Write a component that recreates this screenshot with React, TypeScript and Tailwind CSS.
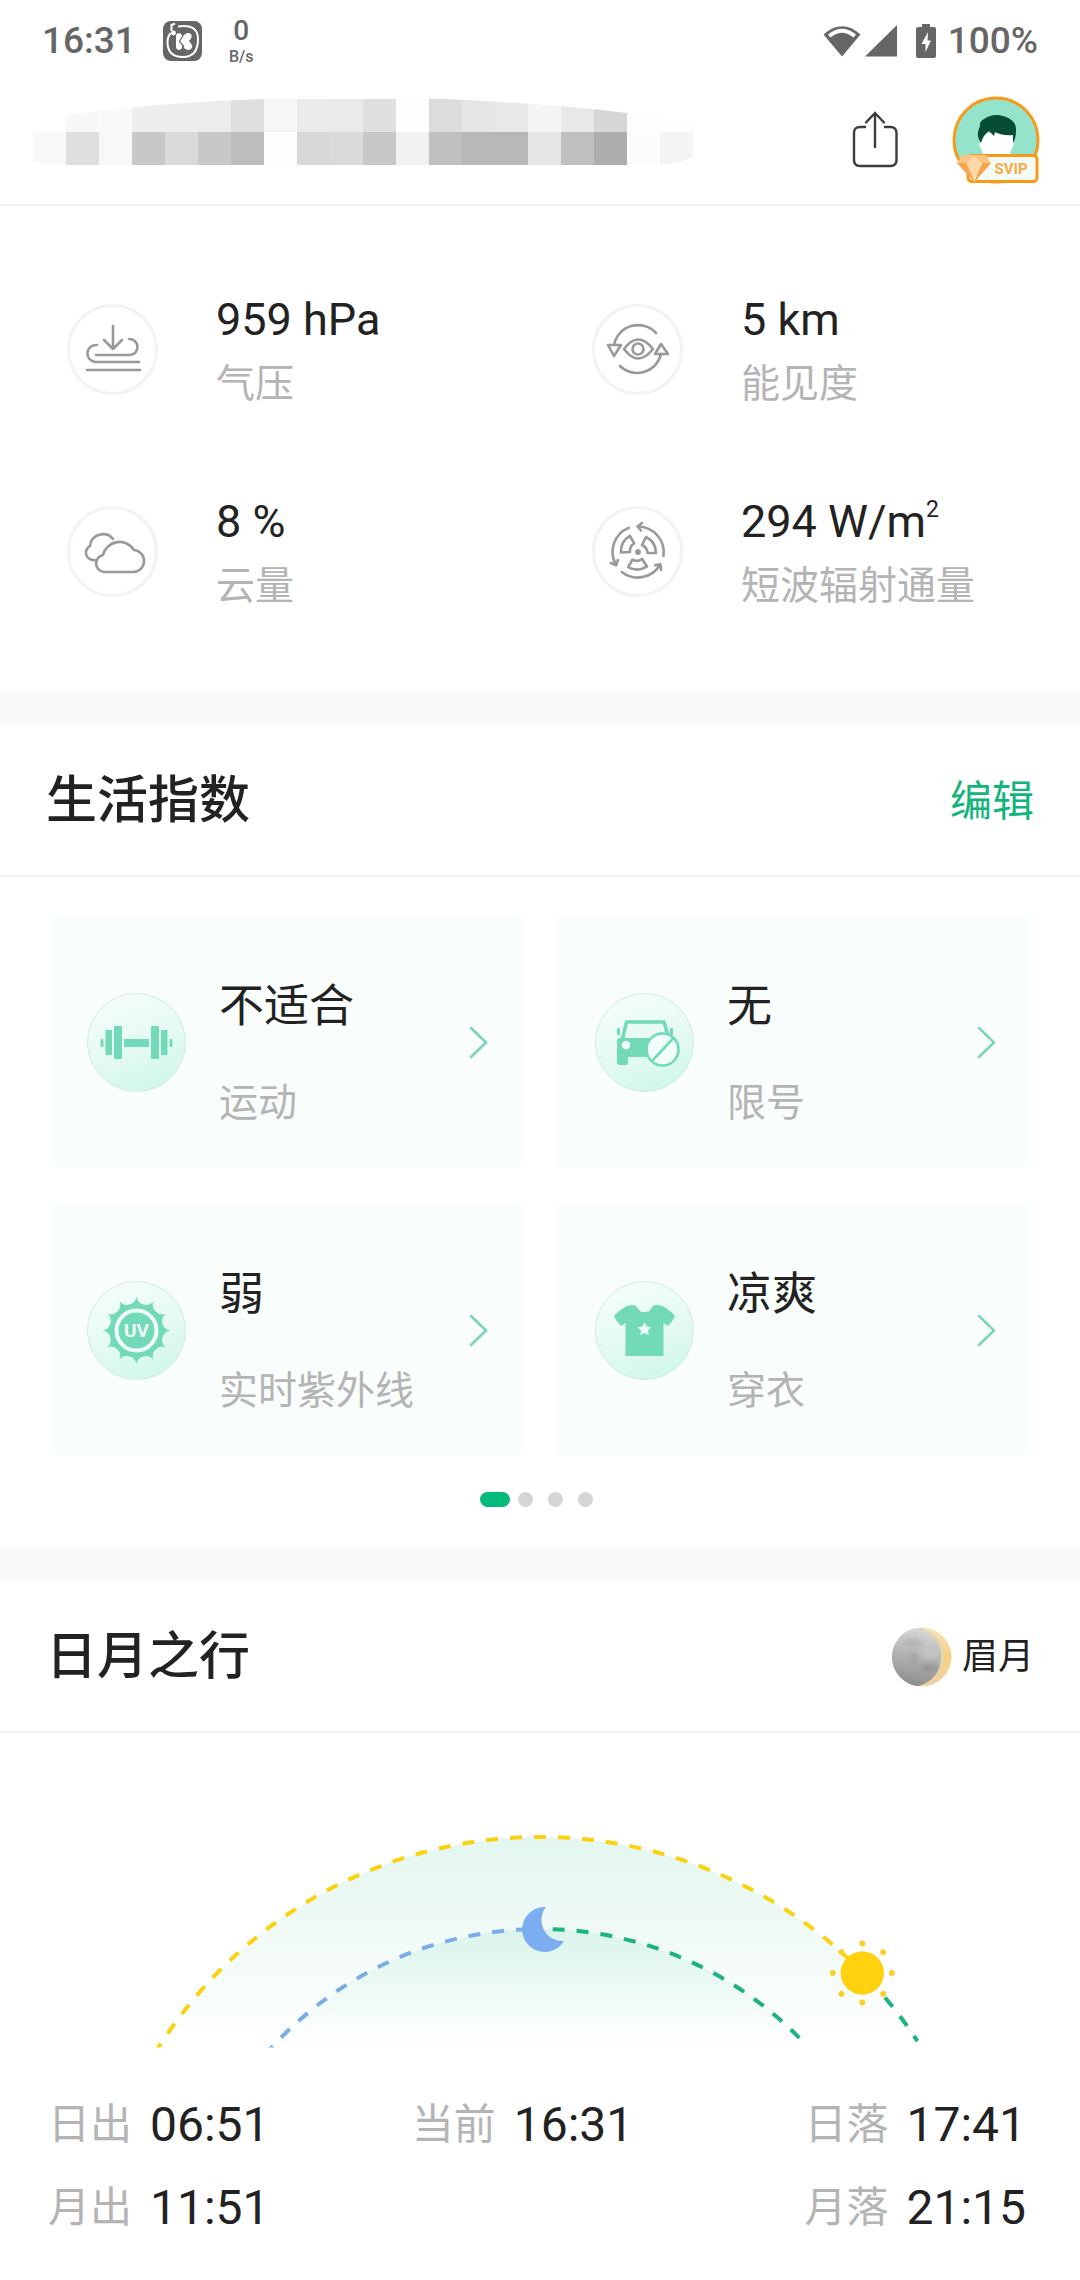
import React from 'react';

interface Metric {
  value: React.ReactNode;
  label: string;
  icon: React.ReactNode;
}

interface LifeIndex {
  value: string;
  label: string;
  icon: React.ReactNode;
}

const GREEN = '#72dab8';

const PressureIcon = () => (
  <>
    <path d="M46 22V45M37 36L46 45L55 36" />
    <path d="M62 35A8 8 0 0 1 63 51H29" />
    <path d="M30 41A8.5 8.5 0 0 0 28 58H72" />
    <path d="M20 66H73" />
  </>
);

const VisibilityIcon = () => (
  <>
    <path d="M22 41A24.5 24.5 0 0 1 64 29" />
    <path d="M69 50A24.5 24.5 0 0 1 28 62" />
    <path d="M16 41H29L22 52Z" />
    <path d="M63 50H76L69 40Z" />
    <path d="M32 45Q46 26 61 45Q46 64 32 45Z" />
    <circle cx="46" cy="45" r="5.5" />
  </>
);

const CloudIcon = () => (
  <>
    <path d="M46 33A13 13 0 0 0 23 40A7.5 7.5 0 0 0 28 54" />
    <path d="M37 66H65A11 11 0 0 0 67 44A17 17 0 0 0 36 49A8.6 8.6 0 0 0 37 66Z" />
  </>
);

const RadiationIcon = () => (
  <>
    <circle cx="46" cy="46" r="1.6" fill="#999" />
    {[0, 120, 240].map((deg) => (
      <g key={deg} transform={`rotate(${deg} 46 46)`}>
        <path d="M71.500 50A26 26 0 0 0 46 20.500M50 17L45.500 20.500L49 24.500" />
        <path d="M54 31A18 18 0 0 1 64 47H55.500A9 9 0 0 0 50 39Z" />
      </g>
    ))}
  </>
);

const DumbbellIcon = () => (
  <g fill={GREEN}>
    <rect x="37" y="46" width="25" height="8" />
    <rect x="27" y="33" width="8" height="33" rx="1" />
    <rect x="18.500" y="37" width="6.500" height="25" rx="1" />
    <rect x="13.500" y="46" width="3" height="8" rx="1" />
    <rect x="64" y="33" width="8" height="33" rx="1" />
    <rect x="74" y="37" width="6.500" height="25" rx="1" />
    <rect x="82.500" y="46" width="3" height="8" rx="1" />
  </g>
);

const CarIcon = () => (
  <g>
    <path d="M27.500 46L31.500 29H69L74 46" fill="none" stroke={GREEN} strokeWidth="3.500" strokeLinejoin="round" />
    <path d="M22 48Q22 45 25 45H76V64H33V70Q33 72 31 72H24Q22 72 22 70Z" fill={GREEN} />
    <rect x="22" y="35" width="3" height="7" rx="1" fill={GREEN} />
    <rect x="75" y="35" width="3" height="7" rx="1" fill={GREEN} />
    <circle cx="31" cy="52" r="4.200" fill="#f4fefa" />
    <circle cx="67.500" cy="56.500" r="16" fill="#f1fdf9" stroke={GREEN} strokeWidth="2.600" />
    <path d="M57 68L78.500 45" stroke={GREEN} strokeWidth="2.600" />
  </g>
);

const UvIcon = () => {
  const tips = Array.from({ length: 12 }, (_, i) => {
    const a = (i * Math.PI) / 6;
    return `${(49.5 + 34 * Math.sin(a)).toFixed(2)} ${(49.5 - 34 * Math.cos(a)).toFixed(2)}`;
  });
  const d = `M${tips[0]}${tips.slice(1).map((p) => `A9.5 9.5 0 0 0 ${p}`).join('')}A9.5 9.5 0 0 0 ${tips[0]}Z`;

  return (
    <g>
      <path d={d} fill={GREEN} />
      <circle cx="49.5" cy="49.5" r="20" fill="none" stroke="#effcf8" strokeWidth="4" />
      <text x="49.5" y="56" textAnchor="middle" fontSize="19" fontWeight="700" fill="#effcf8">UV</text>
    </g>
  );
};

const ShirtIcon = () => (
  <g>
    <path
      d="M39 24Q42 25 44 29Q45 31 48 31H51Q54 31 55 29Q57 25 60 24Q68 24 72 28Q77 31 80 35Q78 40 73 45L68.500 42V75H30.500V42L26 45Q21 40 19 35Q22 31 27 28Q31 24 39 24Z"
      fill={GREEN}
    />
    <path
      d="M49.500 42L51.300 46L55.500 46.500L52.500 49.500L53.200 53.500L49.500 51.500L45.800 53.500L46.500 49.500L43.500 46.500L47.700 46Z"
      fill="#effcf8"
      stroke="#effcf8"
      strokeLinejoin="round"
    />
  </g>
);

const metrics: Metric[] = [
  { value: '959 hPa', label: '气压', icon: <PressureIcon /> },
  { value: '5 km', label: '能见度', icon: <VisibilityIcon /> },
  { value: '8 %', label: '云量', icon: <CloudIcon /> },
  {
    value: (
      <>
        294 W/m<sup className="-top-[20px] text-[23px] leading-none">2</sup>
      </>
    ),
    label: '短波辐射通量',
    icon: <RadiationIcon />,
  },
];

const lifeIndexes: LifeIndex[] = [
  { value: '不适合', label: '运动', icon: <DumbbellIcon /> },
  { value: '无', label: '限号', icon: <CarIcon /> },
  { value: '弱', label: '实时紫外线', icon: <UvIcon /> },
  { value: '凉爽', label: '穿衣', icon: <ShirtIcon /> },
];

// Masked location name, two rows of tiles
const TILE_TOP = ['', '#f7f7f7', '#f9f9f9', '#eeeeee', '#eeeeee', '#ececec', '#dfdfdf', '#f6f6f6', '#ebebeb', '#eaeaea', '#dfdfdf', '#fefefe', '#dcdcdc', '#e6e6e6', '#e8e8e8', '#f5f5f5', '#e8e8e8', '#d6d6d6', '#fdfdfd', '#fdfdfd'];
const TILE_BOTTOM = ['#f8f8f8', '#dfdfdf', '#f8f8f8', '#c8c8c8', '#dadada', '#c8c8c8', '#bebebe', '#fdfdfd', '#d8d8d8', '#dadada', '#c8c8c8', '#f1f1f1', '#c0c0c0', '#b8b8b8', '#b8b8b8', '#e5e5e5', '#bfbfbf', '#adadad', '#fcfcfc', '#f4f4f4'];

const StatusBar = () => (
  <div className="flex h-[82px] items-center justify-between px-[42px] text-[37px] font-medium text-[#666]">
    <div className="flex items-center">
      <span>16:31</span>
      <svg className="ml-[27px] size-10" viewBox="0 0 40 40" aria-hidden="true">
        <rect width="39" height="40" rx="8" fill="#666" />
        <path d="M15 5.500Q35 2.500 35 18Q35 36 20 36Q4.500 36 4.500 21Q4.500 15 8 12" fill="none" stroke="#fff" strokeWidth="2" />
        <path d="M7.500 4.500L12 2.500M8.500 5V10" stroke="#fff" strokeWidth="2" />
        <circle cx="10.500" cy="12" r="2.400" fill="#fff" />
        <path d="M13 14Q16 10 19 14V17Q23 10 28 13Q30 16 26 20Q31 25 28 28Q23 31 19 24V27Q16 31 13 27Z" fill="#fff" />
        <path d="M19 16L16.500 20.500L21 26" fill="none" stroke="#666" strokeWidth="1.200" />
      </svg>
      <span className="ml-[26px] flex flex-col items-center pb-[3px]">
        <span className="text-[28px] leading-[33px]">0</span>
        <span className="text-[16px] leading-[19px]">B/s</span>
      </span>
    </div>
    <div className="flex items-center">
      <svg className="h-[34px] w-[74px]" viewBox="0 0 74 34" aria-hidden="true">
        <path d="M0.500 10.500Q19 -6 37.500 10.500L19 32.500Z" fill="#666" />
        <path d="M5 10.500Q19 -1 33 10.500L30.500 13.500Q19 4 7.500 13.500Z" fill="#fff" />
        <path d="M74 1V32.500H42Z" fill="#666" />
      </svg>
      <svg className="ml-[19px] h-[36px] w-[20px]" viewBox="0 0 20 36" aria-hidden="true">
        <path d="M6 1H14V4H18Q20 4 20 6V33Q20 35 18 35H2Q0 35 0 33V6Q0 4 2 4H6Z" fill="#666" />
        <path d="M12 9L5.500 21H9.500V29L15 17.500H11.500Z" fill="#fff" />
      </svg>
      <span className="ml-3">100%</span>
    </div>
  </div>
);

const Avatar = () => (
  <svg className="size-[90px]" viewBox="0 0 90 90" aria-hidden="true">
    <circle cx="45" cy="45" r="42" fill="#94e4cb" stroke="#f79a1c" strokeWidth="3" />
    <path d="M29 38H62V47Q64 50 61 53Q59 58 59 62H32Q32 58 30 53Q27 50 29 47Z" fill="#fff" />
    <path d="M30 48Q24 40 29 31Q28 27 33 24Q42 18 52 21Q66 25 65 36Q65 43 62 48V40Q52 41 44 37L43 41L38 36Q32 40 30 48Z" fill="#064c36" />
    <rect x="17" y="60.500" width="69" height="26" rx="4" fill="#f4fbf5" stroke="#f79a1c" strokeWidth="3" />
    <path d="M6 68L11 60H35L40 68L23.500 87Z" fill="#fbc483" />
    <path d="M6 68H15L23.500 87ZM31 68H40L23.500 87Z" fill="#f6a54d" />
    <path d="M16 68L23 61L31 68L23.500 86Z" fill="#fdd9a8" />
    <text x="60" y="79" textAnchor="middle" fontSize="15" fontWeight="700" fill="#f5aa45">SVIP</text>
  </svg>
);

const Header = () => (
  <header className="border-b-2 border-[#f1f1f1]">
    <StatusBar />
    <div className="flex h-[122px] items-center justify-between pb-[6px] pl-[33px] pr-[39px]">
      <svg className="h-[82px] w-[660px]" viewBox="0 0 660 82" aria-hidden="true">
        <clipPath id="tile-edge">
          <path d="M0 33H33V16Q130 3 231 0H410Q510 4 594 14L660 26V59Q645 64 627 66H33Q12 66 0 62Z" />
        </clipPath>
        <g clipPath="url(#tile-edge)" shapeRendering="crispEdges">
          {TILE_TOP.map((fill, i) => fill && <rect key={i} x={i * 33} y="0" width="33" height="33" fill={fill} />)}
          {TILE_BOTTOM.map((fill, i) => (
            <rect key={i} x={i * 33} y="33" width="33" height="33" fill={fill} />
          ))}
        </g>
      </svg>
      <div className="flex items-center gap-[53px]">
        <button type="button" aria-label="分享">
          <svg className="h-[58px] w-[46px]" viewBox="0 1 46 58" fill="none" stroke="#3c3c3c" strokeWidth="2.400" strokeLinecap="round">
            <path d="M13 17H8Q2 17 2 23V50Q2 56 8 56H38.500Q44.500 56 44.500 50V23Q44.500 17 38.500 17H33" />
            <path d="M23 3V37M14 12.500L23 3L32 12.500" />
          </svg>
        </button>
        <button type="button" aria-label="我的">
          <Avatar />
        </button>
      </div>
    </div>
  </header>
);

const MetricItem: React.FC<Metric> = ({ value, label, icon }) => (
  <div className="flex gap-[58px] pl-[52px]">
    <svg className="mt-4 size-[91px] shrink-0" viewBox="0 0 91 91" fill="none" stroke="#999" strokeWidth="2.600" strokeLinecap="round" strokeLinejoin="round" aria-hidden="true">
      <circle cx="45.500" cy="45.500" r="44" stroke="#f3f3f3" strokeWidth="3" />
      {icon}
    </svg>
    <div className="flex flex-col gap-[2px] leading-[63px]">
      <div className="text-[45px]">{value}</div>
      <div className="text-[39px] text-[#b4b4b4]">{label}</div>
    </div>
  </div>
);

const SectionHeader: React.FC<{ title: string; children: React.ReactNode }> = ({ title, children }) => (
  <div className="flex h-[152px] items-center justify-between border-b-2 border-[#f3f3f3] px-[46px] pt-[2px]">
    <h2 className="text-[51px] font-medium">{title}</h2>
    {children}
  </div>
);

const IndexCard: React.FC<LifeIndex> = ({ value, label, icon }) => (
  <button type="button" className="flex items-center bg-[#f9fefd] pb-[34px] pl-[37px] pr-[34px] pt-[36px] text-left">
    <svg className="size-[99px] shrink-0" viewBox="0 0 99 99" aria-hidden="true">
      <circle cx="49.5" cy="49.5" r="49" fill="url(#badge)" stroke="#cdeee2" />
      {icon}
    </svg>
    <span className="ml-[33px] flex flex-1 flex-col gap-9 pt-[26px] leading-[60px]">
      <span className="text-[45px]">{value}</span>
      <span className="text-[39px] text-[#b4b4b4]">{label}</span>
    </span>
    <svg className="h-[34px] w-5" viewBox="0 0 20 34" fill="none" stroke="#7fd3b9" strokeWidth="2.600" strokeLinecap="round" aria-hidden="true">
      <path d="M3 3L18 17.500L3 32" />
    </svg>
  </button>
);

const MoonPhase = () => (
  <svg className="size-[60px]" viewBox="0 0 60 60" aria-hidden="true">
    <defs>
      <linearGradient id="moon-lit" x1="0" y1="0" x2="0" y2="1">
        <stop offset="0" stopColor="#f8e3bd" />
        <stop offset="0.500" stopColor="#f6d184" />
        <stop offset="1" stopColor="#ecd3aa" />
      </linearGradient>
      <linearGradient id="moon-dark" x1="0.600" y1="0" x2="0.400" y2="1">
        <stop offset="0" stopColor="#dcdcdc" />
        <stop offset="0.500" stopColor="#b5b5b5" />
        <stop offset="1" stopColor="#8c8c8c" />
      </linearGradient>
      <filter id="crater">
        <feGaussianBlur stdDeviation="2.500" />
      </filter>
      <clipPath id="moon-disc">
        <path d="M26 0.700A29.500 29.500 0 0 0 26 59.300Q49 52 49 30Q49 8 26 0.700Z" />
      </clipPath>
    </defs>
    <circle cx="30" cy="30" r="29.500" fill="url(#moon-lit)" />
    <path d="M28 0.500Q54 10 52 30Q50 50 28 59.500Z" fill="#e6d7a8" />
    <g clipPath="url(#moon-disc)">
      <rect width="60" height="60" fill="url(#moon-dark)" />
      <g filter="url(#crater)">
        <ellipse cx="20" cy="16" rx="10" ry="4" fill="#b2b2b2" />
        <ellipse cx="38" cy="25" rx="9" ry="6" fill="#c4c4c4" />
        <ellipse cx="37" cy="41" rx="9" ry="4" fill="#949494" />
        <ellipse cx="22" cy="33" rx="4" ry="8" fill="#a2a2a2" />
      </g>
    </g>
  </svg>
);

const SunMoonChart = () => (
  <svg className="w-full" viewBox="0 1733 1080 315" fill="none" strokeWidth="4" aria-hidden="true">
    <defs>
      <linearGradient id="sky" gradientUnits="userSpaceOnUse" x1="0" y1="1837" x2="0" y2="2047">
        <stop offset="0" stopColor="#e3f6f0" />
        <stop offset="1" stopColor="#fff" />
      </linearGradient>
      <linearGradient id="night" gradientUnits="userSpaceOnUse" x1="0" y1="1929" x2="0" y2="2047">
        <stop offset="0" stopColor="#daf4eb" />
        <stop offset="1" stopColor="#fff" />
      </linearGradient>
      <clipPath id="horizon">
        <rect x="0" y="1733" width="1080" height="314.500" />
      </clipPath>
    </defs>
    <g clipPath="url(#horizon)">
      <circle cx="540" cy="2288" r="451" fill="url(#sky)" />
      <circle cx="540" cy="2292" r="363" fill="url(#night)" />
      <g strokeDasharray="12 12">
        <path d="M540 1837A451 451 0 0 0 156 2051.500" stroke="#fbd20f" strokeDashoffset="6" />
        <path d="M540 1837A451 451 0 0 1 862 1972" stroke="#fbd20f" strokeDashoffset="6" />
        <path d="M885 1997.500A451 451 0 0 1 917.500 2041.200" stroke="#1bb47b" />
        <path d="M528 1929.200A363 363 0 0 0 265 2055" stroke="#7cabe9" />
        <path d="M552.700 1929.200A363 363 0 0 1 800 2038.700" stroke="#1bb47b" />
      </g>
    </g>
    <path d="M546 1907A22.500 22.500 0 1 0 564 1941A21 21 0 0 1 546 1907Z" fill="#7baef0" />
    <circle cx="862.300" cy="1973" r="21.700" fill="#ffd10f" />
    {[0, 45, 90, 135, 180, 225, 270, 315].map((deg) => (
      <circle key={deg} cx="862.300" cy="1943.500" r="2.900" fill="#fbd020" transform={`rotate(${deg} 862.300 1973)`} />
    ))}
  </svg>
);

const TimeItem: React.FC<{ label: string; time: string }> = ({ label, time }) => (
  <div className="flex items-center gap-[18px] leading-[60px]">
    <span className="text-[42px] text-[#b4b4b4]">{label}</span>
    <span className="text-[48px]">{time}</span>
  </div>
);

const App: React.FC = () => {
  return (
    <main className="min-h-screen bg-white font-['Roboto','Noto_Sans_CJK_SC',sans-serif] text-[#222]">
      <svg className="absolute size-0" aria-hidden="true">
        <linearGradient id="badge" x1="0.300" y1="0" x2="0.700" y2="1">
          <stop offset="0" stopColor="#f4fefb" />
          <stop offset="0.500" stopColor="#e6faf4" />
          <stop offset="1" stopColor="#d0f7eb" />
        </linearGradient>
      </svg>

      <Header />

      <section className="grid grid-cols-2 gap-y-[74px] px-[15px] pb-[72px] pt-[82px]">
        {metrics.map((metric) => (
          <MetricItem key={metric.label} {...metric} />
        ))}
      </section>

      <section className="border-t-[35px] border-[#fafafa]">
        <SectionHeader title="生活指数">
          <button type="button" className="text-[42px] text-[#11b57c]">编辑</button>
        </SectionHeader>
        <div className="grid grid-cols-2 gap-9 px-[50px] pt-[38px]">
          {lifeIndexes.map((item) => (
            <IndexCard key={item.label} {...item} />
          ))}
        </div>
        <div className="flex justify-center gap-2 pb-[39px] pr-[7px] pt-[37px]">
          <span className="h-[15px] w-[30px] rounded-full bg-[#06ba7c]" />
          <div className="flex gap-[15px]">
            <span className="size-[15px] rounded-full bg-[#d5d5d5]" />
            <span className="size-[15px] rounded-full bg-[#d5d5d5]" />
            <span className="size-[15px] rounded-full bg-[#d5d5d5]" />
          </div>
        </div>
      </section>

      <section className="border-t-[35px] border-[#fafafa]">
        <SectionHeader title="日月之行">
          <div className="flex items-center gap-2.5 text-[36px]">
            <MoonPhase />
            <span>眉月</span>
          </div>
        </SectionHeader>
        <SunMoonChart />
        <div className="grid grid-cols-[365fr_394fr_auto] gap-y-[23px] pb-[42px] pl-12 pr-[54px] pt-[47px]">
          <TimeItem label="日出" time="06:51" />
          <TimeItem label="当前" time="16:31" />
          <TimeItem label="日落" time="17:41" />
          <TimeItem label="月出" time="11:51" />
          <span />
          <TimeItem label="月落" time="21:15" />
        </div>
      </section>
    </main>
  );
};

export default App;
